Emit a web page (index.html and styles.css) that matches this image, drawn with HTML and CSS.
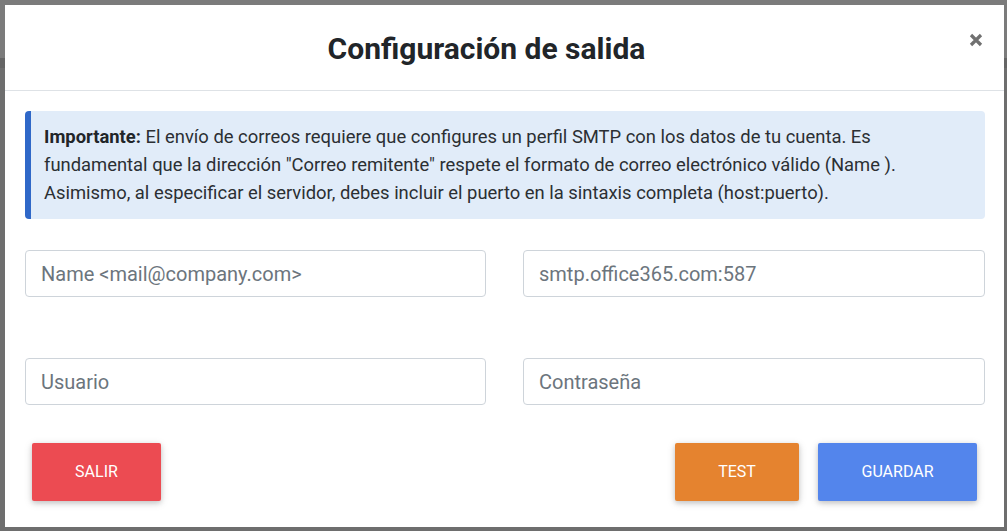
FILE: index.html
```html
<!DOCTYPE html>
<html lang="es">
<head>
<meta charset="utf-8">
<title>Configuración de salida</title>
<link rel="stylesheet" href="styles.css">
</head>
<body>
<div class="backdrop">
  <div class="modal">
    <div class="modal-header">
      <h4 class="modal-title">Configuración de salida</h4>
      <button class="close" aria-label="Cerrar">
        <svg width="14" height="14" viewBox="0 0 14 14"><path d="M2 2 L12 12 M12 2 L2 12" stroke="#707070" stroke-width="3.2" stroke-linecap="butt"/></svg>
      </button>
    </div>
    <div class="modal-body">
      <div class="alert"><strong>Importante:</strong> El envío de correos requiere que configures un perfil SMTP con los datos de tu cuenta. Es fundamental que la dirección "Correo remitente" respete el formato de correo electrónico válido (Name ). Asimismo, al especificar el servidor, debes incluir el puerto en la sintaxis completa (host:puerto).</div>
      <div class="form-grid">
        <input class="form-control" type="text" placeholder="Name &lt;mail@company.com&gt;">
        <input class="form-control" type="text" placeholder="smtp.office365.com:587">
        <input class="form-control" type="text" placeholder="Usuario">
        <input class="form-control" type="password" placeholder="Contraseña">
      </div>
      <div class="actions">
        <button class="btn btn-danger">SALIR</button>
        <div class="actions-right">
          <button class="btn btn-warning">TEST</button>
          <button class="btn btn-primary">GUARDAR</button>
        </div>
      </div>
    </div>
  </div>
</div>
</body>
</html>
```

FILE: styles.css
```css
* { box-sizing: border-box; }
html, body { margin: 0; padding: 0; }
body {
  width: 1007px;
  height: 531px;
  overflow: hidden;
  background: #787878;
  font-family: Roboto, "Liberation Sans", Arial, sans-serif;
  color: #212529;
}
.backdrop {
  padding: 5px 3px 4px 5px;
  height: 531px;
  background: linear-gradient(to bottom, #7b7b7b 0, #7b7b7b 58px, #656565 58px, #656565 68px, #6e6e6e 68px);
}
.modal {
  width: 999px;
  height: 522px;
  background: #fff;
  display: flex;
  flex-direction: column;
}
.modal-header {
  height: 86px;
  border-bottom: 1px solid #dee2e6;
  display: flex;
  align-items: center;
  justify-content: center;
  padding-right: 36px;
  position: relative;
}
.modal-title {
  margin: 0;
  font-size: 30px;
  font-weight: 700;
  color: #212529;
  padding-top: 1px;
}
.close {
  position: absolute;
  right: 21px;
  top: 28px;
  background: none;
  border: 0;
  padding: 0;
  width: 14px;
  height: 14px;
  cursor: pointer;
}
.close svg { display: block; }
.modal-body {
  padding: 20px 19px 0 20px;
  display: flex;
  flex-direction: column;
}
.alert {
  background: #e1ecf9;
  border-left: 6px solid #2f68c8;
  border-radius: 4px;
  padding: 12px 14px 12px 13px;
  font-size: 18.4px;
  line-height: 28px;
  color: #2b2f33;
}
.alert strong { font-weight: 700; color: #212529; }
.form-grid {
  margin-top: 31px;
  display: grid;
  grid-template-columns: 461px 462px;
  column-gap: 37px;
  row-gap: 61px;
}
.form-control {
  height: 47px;
  width: 100%;
  border: 1px solid #ced4da;
  border-radius: 4px;
  padding: 0 15px;
  font-family: Roboto, "Liberation Sans", Arial, sans-serif;
  font-size: 20px;
  color: #495057;
  background: #fff;
  outline: none;
}
.form-control::placeholder { color: #6c757d; opacity: 1; }
.actions {
  margin-top: 38px;
  display: flex;
  justify-content: space-between;
  padding: 0 8px 0 7px;
}
.actions-right {
  display: flex;
  gap: 19px;
}
.btn {
  height: 58px;
  padding: 0 20px 2px;
  border: 0;
  border-radius: 2px;
  color: #fff;
  font-family: Roboto, "Liberation Sans", Arial, sans-serif;
  font-size: 16px;
  font-weight: 400;
  letter-spacing: 0;
  box-shadow: 0 2px 5px 0 rgba(0,0,0,.16), 0 2px 10px 0 rgba(0,0,0,.12);
  cursor: pointer;
}
.btn-danger { background: #ec4b52; width: 129px; }
.btn-warning { background: #e5832f; width: 124px; }
.btn-primary { background: #5385ec; width: 159px; }
```
